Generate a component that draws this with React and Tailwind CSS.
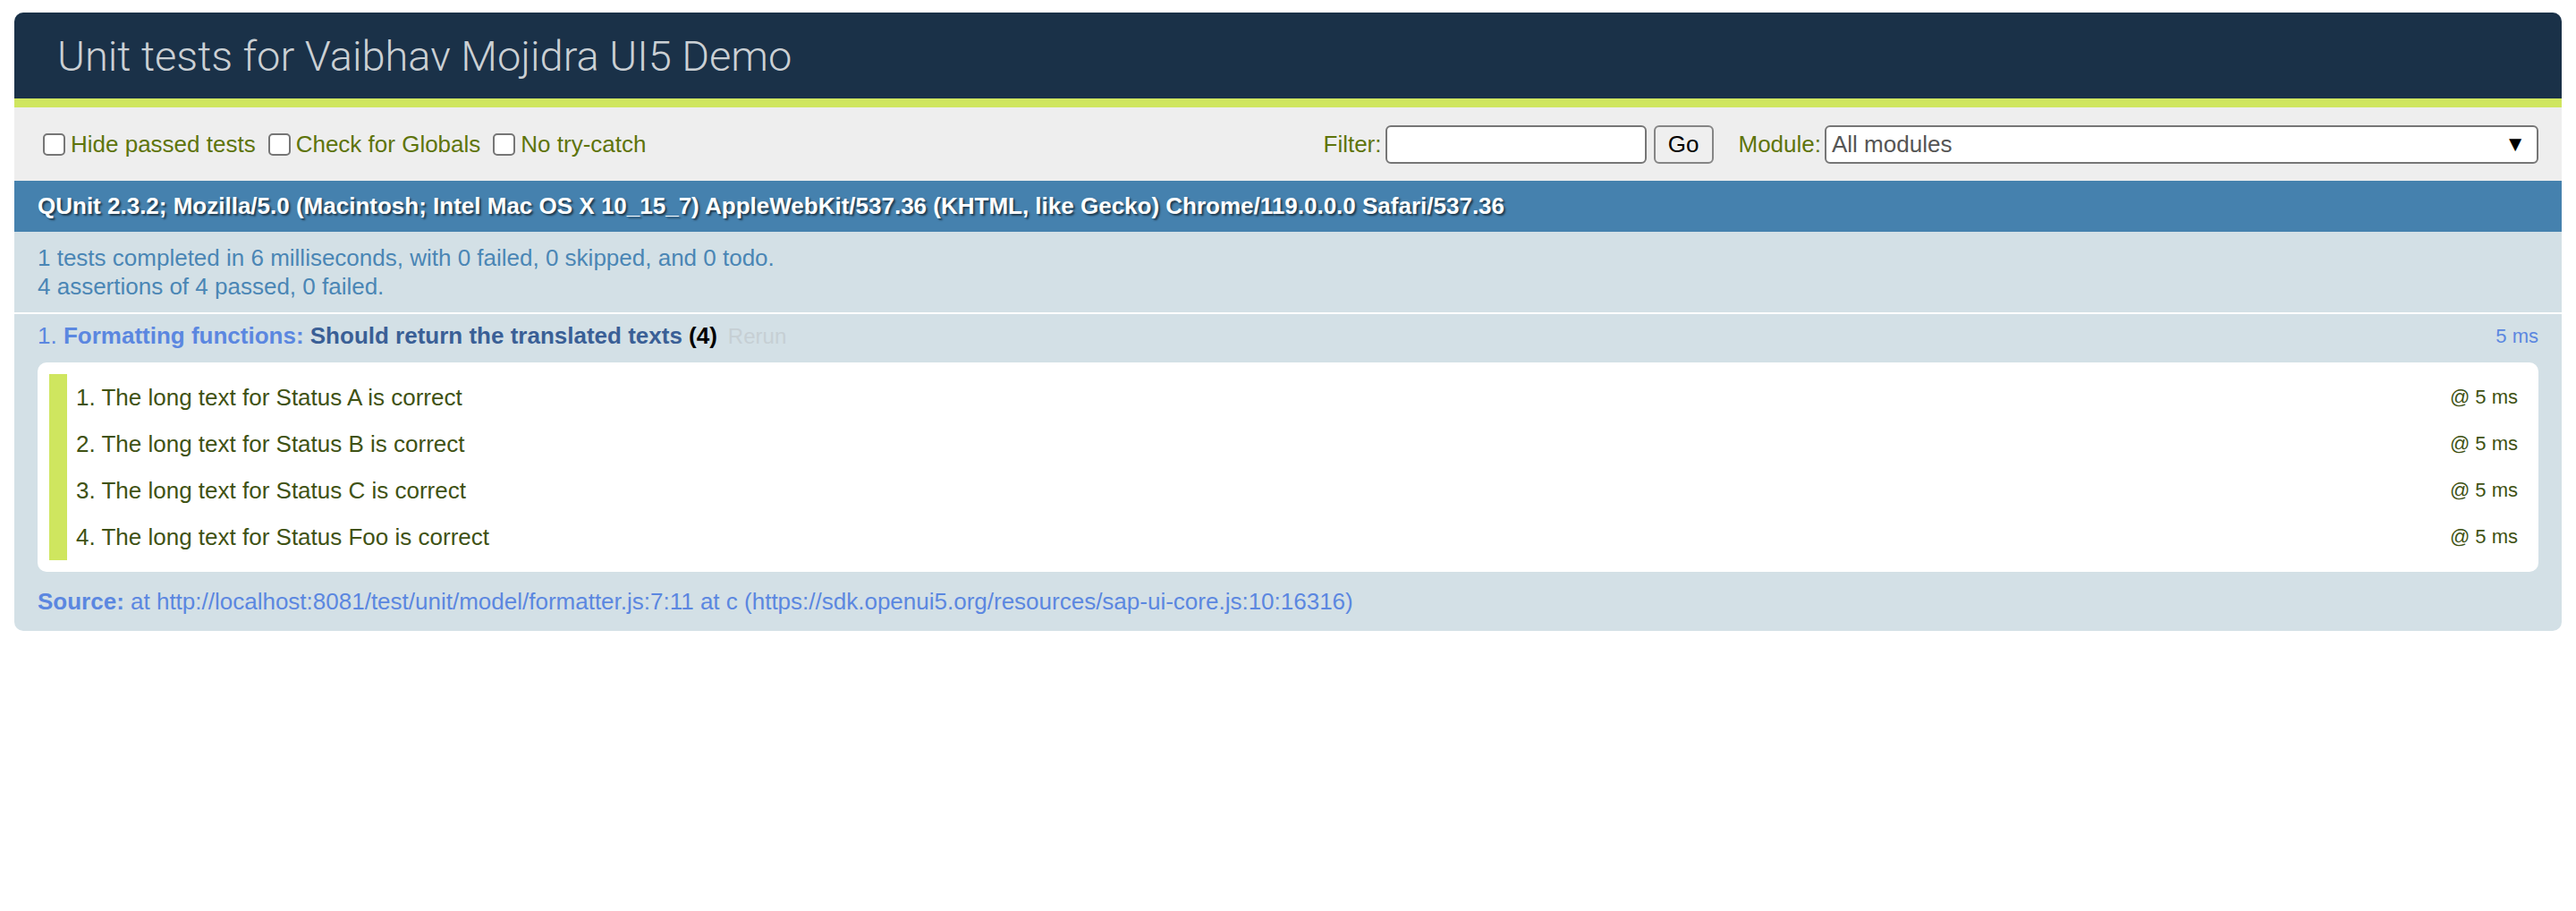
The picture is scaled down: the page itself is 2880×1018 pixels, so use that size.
import React from 'react';

const assertions = [
  'The long text for Status A is correct',
  'The long text for Status B is correct',
  'The long text for Status C is correct',
  'The long text for Status Foo is correct',
];

const Check = ({ label }) => (
  <label className="flex items-center">
    <span className="ml-[6px] mr-[6px] w-[25px] h-[25px] rounded-[5px] border-2 border-[#767676] bg-white" />
    <span>{label}</span>
  </label>
);

export default function App() {
  return (
    <div className="min-h-screen bg-white pt-[14px] px-4 font-['Liberation_Sans',Arial,sans-serif]">
      <div className="rounded-[10px] overflow-hidden bg-[#d3e0e6]">
        {/* header */}
        <h1 className="h-[96px] flex items-center pl-[48px] bg-[#1a3148] text-[#cbd0d4] text-[47px] leading-none font-light font-['Roboto','Liberation_Sans',sans-serif]">
          Unit tests for Vaibhav Mojidra UI5 Demo
        </h1>
        <div className="h-[10px] bg-[#cfe65f]" />

        {/* toolbar */}
        <div className="h-[82px] flex items-center justify-between pl-[26px] pr-[26px] bg-[#eeeeee] text-[26px] text-[#5e740b]">
          <div className="flex items-center gap-[8px]">
            <Check label="Hide passed tests" />
            <Check label="Check for Globals" />
            <Check label="No try-catch" />
          </div>
          <div className="flex items-center">
            <span className="mr-[4px]">Filter:</span>
            <span className="w-[292px] h-[43px] rounded-[6px] border-2 border-[#767676] bg-white" />
            <span className="ml-[8px] w-[67px] h-[43px] rounded-[6px] border-2 border-[#858585] bg-[#efefef] flex items-center justify-center text-black">Go</span>
            <span className="ml-[28px] mr-[4px]">Module:</span>
            <span className="w-[798px] h-[43px] rounded-[6px] border-2 border-[#767676] bg-white flex items-center justify-between pl-[6px] pr-[12px] text-[#555555]">
              <span>All modules</span>
              <span className="text-black text-[24px]">▼</span>
            </span>
          </div>
        </div>

        {/* user agent */}
        <div className="h-[57px] flex items-center px-[26px] bg-[#4581ae] text-white text-[26px] font-bold [text-shadow:2px_2px_2px_rgba(0,0,0,0.55)]">
          QUnit 2.3.2; Mozilla/5.0 (Macintosh; Intel Mac OS X 10_15_7) AppleWebKit/537.36 (KHTML, like Gecko) Chrome/119.0.0.0 Safari/537.36
        </div>

        {/* summary */}
        <div className="py-[13px] px-[26px] text-[26px] leading-[32px] text-[#4a86b5] border-b-2 border-white">
          <div>1 tests completed in 6 milliseconds, with 0 failed, 0 skipped, and 0 todo.</div>
          <div>4 assertions of 4 passed, 0 failed.</div>
        </div>

        {/* test */}
        <div className="pt-[8px] pb-[17px] px-[26px] text-[26px]">
          <div className="flex items-center justify-between leading-[32px]">
            <div>
              <span className="text-[#5b87e0]">1. </span>
              <span className="font-bold text-[#5b87e0]">Formatting functions: </span>
              <span className="font-bold text-[#3a5f96]">Should return the translated texts </span>
              <span className="font-bold text-black">(4)</span>
              <span className="ml-[12px] text-[24px] text-[#c6cfd4]">Rerun</span>
            </div>
            <span className="text-[22px] text-[#5b87e0]">5 ms</span>
          </div>

          <ol className="mt-[13px] p-[13px] bg-white rounded-[10px]">
            {assertions.map((a, i) => (
              <li key={i} className="flex items-center justify-between border-l-[20px] border-[#cfe65f] p-[10px] leading-[32px] text-[#3f5214]">
                <span>{i + 1}. {a}</span>
                <span className="text-[22px]">@ 5 ms</span>
              </li>
            ))}
          </ol>

          <div className="mt-[17px] leading-[32px] text-[#5b87e0]">
            <span className="font-bold">Source: </span>
            <span>at http://localhost:8081/test/unit/model/formatter.js:7:11 at c (https://sdk.openui5.org/resources/sap-ui-core.js:10:16316)</span>
          </div>
        </div>
      </div>
    </div>
  );
}
